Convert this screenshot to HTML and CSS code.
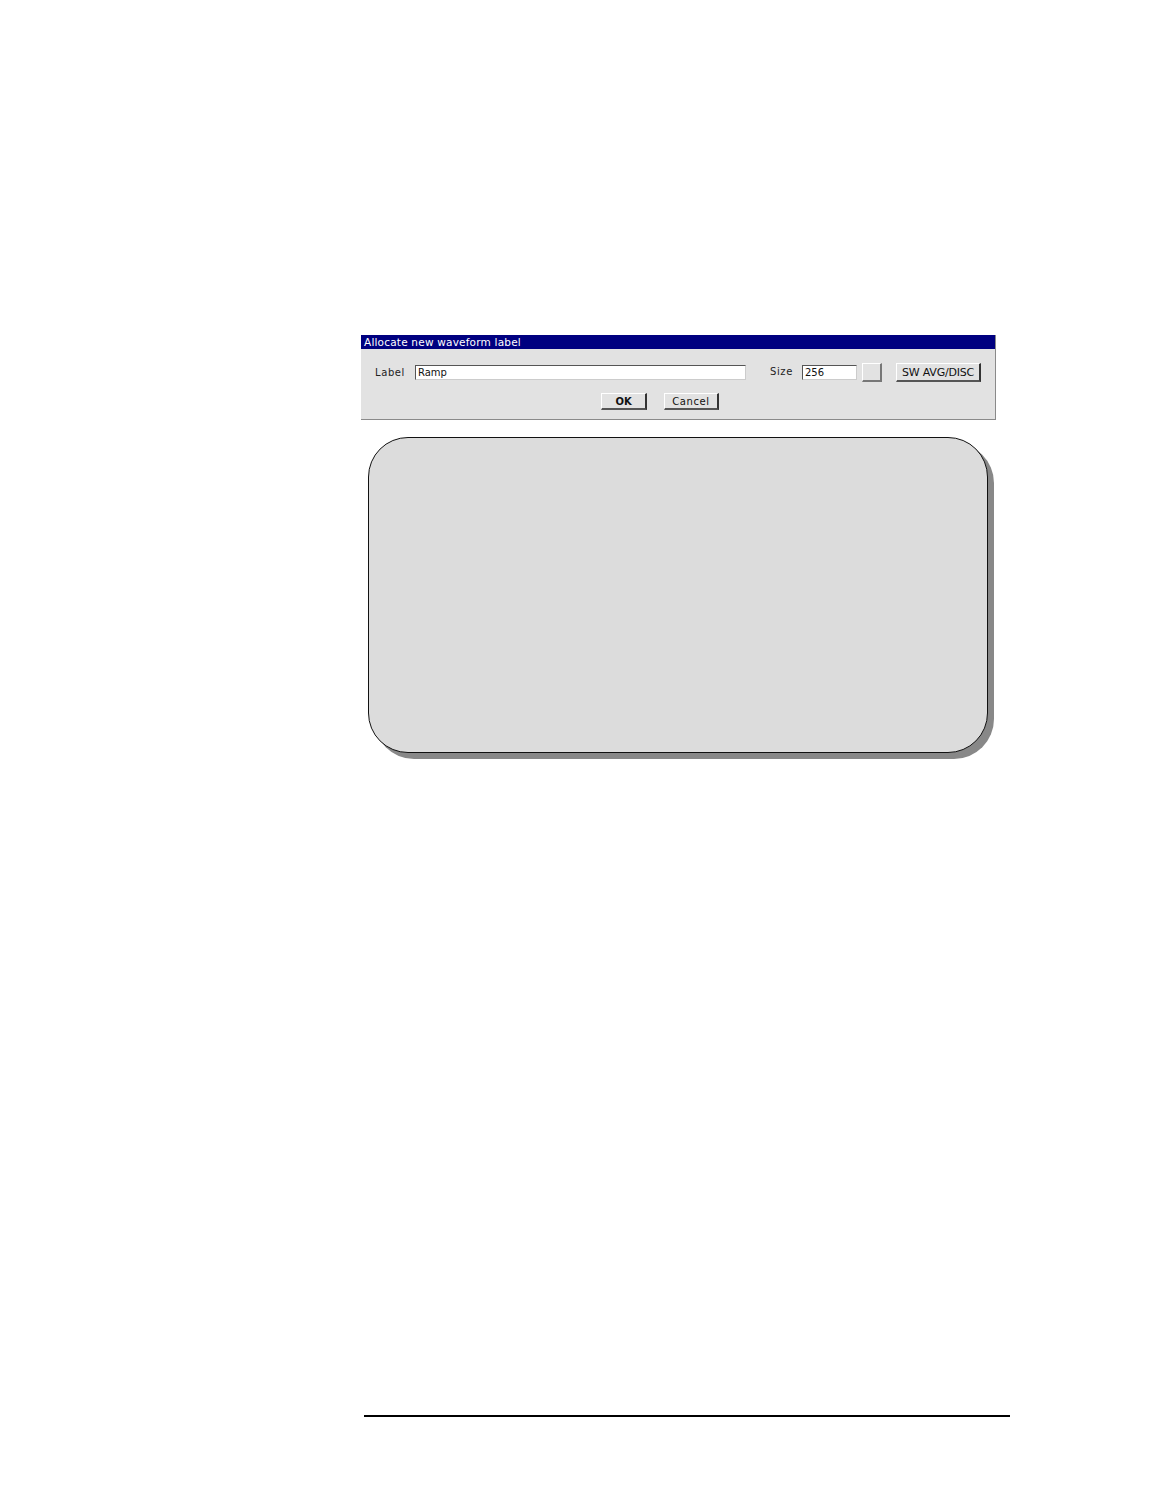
FILE: index.html
```html
<!DOCTYPE html>
<html>
<head>
<meta charset="utf-8">
<link rel="stylesheet" href="styles.css">
</head>
<body>
<div class="page">
  <div class="dialog">
    <div class="titlebar">Allocate new waveform label</div>
    <div class="dlg-body">
      <div class="row1">
        <span class="lbl lbl-label">Label</span>
        <div class="field field-label">Ramp</div>
        <span class="lbl lbl-size">Size</span>
        <div class="field field-size">256</div>
        <div class="btn btn-square"></div>
        <div class="btn btn-sw">SW AVG/DISC</div>
      </div>
      <div class="row2">
        <div class="btn btn-ok">OK</div>
        <div class="btn btn-cancel">Cancel</div>
      </div>
    </div>
  </div>
  <div class="panel"></div>
  <div class="footer-rule"></div>
</div>
</body>
</html>
```
FILE: styles.css
```css
html, body {
  margin: 0;
  padding: 0;
  background: #ffffff;
}
.page {
  padding-top: 335px;
  padding-left: 361px;
  width: 803px;
  height: 1171px;
  font-family: "DejaVu Sans", "Liberation Sans", sans-serif;
}
.dialog {
  width: 634px;
  height: 84px;
  background: #e2e2e2;
  border-right: 1px solid #8a8a8a;
  border-bottom: 1px solid #8a8a8a;
  display: flex;
  flex-direction: column;
}
.titlebar {
  height: 14px;
  background: #000080;
  color: #ffffff;
  font-size: 10.5px;
  line-height: 15px;
  padding-left: 3px;
  letter-spacing: 0.2px;
}
.dlg-body {
  display: flex;
  flex-direction: column;
}
.row1 {
  display: flex;
  align-items: center;
  height: 19px;
  margin-top: 14px;
}
.lbl {
  font-size: 10px;
  color: #222;
  letter-spacing: 0.6px;
}
.lbl-label { margin-left: 14px; width: 40px; }
.lbl-size { margin-left: 24px; width: 32px; margin-top: -2px; }
.field {
  height: 13px;
  background: #ffffff;
  border-top: 1px solid #555;
  border-left: 1px solid #555;
  border-right: 1px solid #ccc;
  border-bottom: 1px solid #ccc;
  font-size: 10px;
  line-height: 14px;
  padding-left: 2px;
  color: #111;
  box-sizing: content-box;
}
.field-label { width: 327px; }
.field-size { width: 51px; }
.btn {
  box-sizing: border-box;
  background: #e2e2e2;
  border-top: 1px solid #ffffff;
  border-left: 1px solid #ffffff;
  border-right: 2px solid #333;
  border-bottom: 2px solid #555;
  font-size: 10px;
  display: flex;
  align-items: center;
  justify-content: center;
  color: #111;
}
.btn-square {
  width: 20px;
  height: 19px;
  margin-left: 5px;
  border-right: 2px solid #777;
  border-bottom: 2px solid #777;
}
.btn-sw {
  width: 85px;
  height: 19px;
  margin-left: 14px;
  font-size: 11px;
  letter-spacing: -0.2px;
}
.row2 {
  display: flex;
  height: 17px;
  margin-top: 11px;
  padding-left: 240px;
}
.btn-ok {
  width: 46px;
  height: 17px;
  font-weight: bold;
}
.btn-cancel {
  width: 55px;
  height: 17px;
  margin-left: 17px;
  letter-spacing: 0.6px;
}
.panel {
  margin-top: 17px;
  margin-left: 7px;
  width: 620px;
  height: 316px;
  box-sizing: border-box;
  background: #dcdcdc;
  border: 1px solid #111;
  border-radius: 40px;
  box-shadow: 6px 6px 0 #888888;
}
.footer-rule {
  margin-top: 662px;
  margin-left: 3px;
  width: 646px;
  height: 2px;
  background: #000;
}
```
